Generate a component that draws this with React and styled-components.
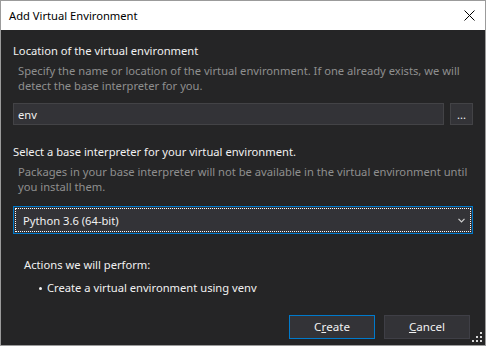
import React from 'react'
import styled, { createGlobalStyle } from 'styled-components'

const GlobalStyle = createGlobalStyle`
    html, body {
        margin: 0;
        padding: 0;
        background: #252526;
    }
    * {
        box-sizing: border-box;
    }
`

const Window = styled.div`
    position: relative;
    width: 486px;
    height: 346px;
    border: 1px solid #9b9b9b;
    display: flex;
    flex-direction: column;
    font-family: "Noto Sans", "Open Sans", sans-serif;
    font-size: 11.2px;
`
const TitleBar = styled.div`
    height: 29px;
    background: #ffffff;
    display: flex;
    align-items: center;
    justify-content: space-between;
    padding: 0 10px 0 8px;
    color: #000000;
`
const Title = styled.span`
    line-height: 16px;
`
const CloseButton = styled.div`
    width: 12px;
    height: 12px;
    display: flex;
    align-items: center;
    justify-content: center;
`
const Body = styled.div`
    flex: 1;
    background: #252526;
    display: flex;
    flex-direction: column;
    padding: 13px 12px 6px 12px;
    color: #f1f1f1;
`
const Heading = styled.div`
    line-height: 16px;
    margin-top: ${p => p.$top || 0}px;
`
const Description = styled.div`
    color: #8f8f8f;
    line-height: 15px;
    padding-left: 5px;
    margin-top: 4px;
    white-space: nowrap;
`
const InputRow = styled.div`
    display: flex;
    gap: 6px;
    margin-top: 10px;
`
const TextInput = styled.div`
    flex: 1;
    height: 22px;
    background: #333337;
    border: 1px solid #434346;
    display: flex;
    align-items: center;
    padding-left: 4px;
    color: #f1f1f1;
`
const BrowseButton = styled.div`
    width: 23px;
    height: 22px;
    background: #333337;
    border: 1px solid #434346;
    display: flex;
    align-items: flex-end;
    justify-content: center;
    padding-bottom: 3px;
    line-height: 12px;
    color: #f1f1f1;
`
const Select = styled.div`
    position: relative;
    margin-top: 12px;
    height: 28px;
    background: #333337;
    border: 1px solid #007acc;
    display: flex;
    align-items: center;
    justify-content: space-between;
    padding: 0 7px 0 9px;
    color: #f1f1f1;
    &::after {
        content: '';
        position: absolute;
        inset: 1px;
        border: 1px dotted #ffffff;
        pointer-events: none;
    }
`
const Actions = styled.div`
    margin-top: 23px;
    padding-left: 11px;
`
const ActionsTitle = styled.div`
    line-height: 16px;
`
const ActionList = styled.ul`
    list-style: none;
    margin: 7px 0 0 0;
    padding: 0 0 0 15px;
`
const ActionItem = styled.li`
    display: flex;
    align-items: center;
    line-height: 16px;
    gap: 5px;
    &::before {
        content: '';
        width: 3px;
        height: 3px;
        border-radius: 50%;
        background: #f1f1f1;
    }
`
const ButtonRow = styled.div`
    margin-top: auto;
    display: flex;
    justify-content: flex-end;
    gap: 9px;
    padding-right: 3px;
`
const Button = styled.div`
    width: 86px;
    height: 24px;
    background: #333337;
    border: 1px solid ${p => (p.$primary ? '#007acc' : '#3f3f46')};
    display: flex;
    align-items: center;
    justify-content: center;
    color: #f1f1f1;
    line-height: 16px;
    font-size: 11.6px;
`
const Grip = styled.svg`
    position: absolute;
    right: 2px;
    bottom: 2px;
`

function App() {
    return (
        <>
            <GlobalStyle />
            <Window>
                <TitleBar>
                    <Title>Add Virtual Environment</Title>
                    <CloseButton>
                        <svg width="11" height="11" viewBox="0 0 11 11">
                            <path d="M0.5 0.5 L10.5 10.5 M10.5 0.5 L0.5 10.5" stroke="#000" strokeWidth="1" fill="none" />
                        </svg>
                    </CloseButton>
                </TitleBar>
                <Body>
                    <Heading>Location of the virtual environment</Heading>
                    <Description>
                        Specify the name or location of the virtual environment. If one already exists, we will<br />
                        detect the base interpreter for you.
                    </Description>
                    <InputRow>
                        <TextInput>env</TextInput>
                        <BrowseButton>...</BrowseButton>
                    </InputRow>
                    <Heading $top={19}>Select a base interpreter for your virtual environment.</Heading>
                    <Description>
                        Packages in your base interpreter will not be available in the virtual environment until<br />
                        you install them.
                    </Description>
                    <Select>
                        <span>Python 3.6 (64-bit)</span>
                        <svg width="7" height="5" viewBox="0 0 7 5">
                            <path d="M0.5 0.8 L3.5 3.8 L6.5 0.8" stroke="#d0d0d0" strokeWidth="1.2" fill="none" />
                        </svg>
                    </Select>
                    <Actions>
                        <ActionsTitle>Actions we will perform:</ActionsTitle>
                        <ActionList>
                            <ActionItem>Create a virtual environment using venv</ActionItem>
                        </ActionList>
                    </Actions>
                    <ButtonRow>
                        <Button $primary>C<u>r</u>eate</Button>
                        <Button><u>C</u>ancel</Button>
                    </ButtonRow>
                </Body>
                <Grip width="11" height="11" viewBox="0 0 11 11">
                    <g fill="#d8d8d8">
                        <rect x="8" y="0" width="2" height="2" />
                        <rect x="4" y="4" width="2" height="2" />
                        <rect x="8" y="4" width="2" height="2" />
                        <rect x="0" y="8" width="2" height="2" />
                        <rect x="4" y="8" width="2" height="2" />
                        <rect x="8" y="8" width="2" height="2" />
                    </g>
                </Grip>
            </Window>
        </>
    )
}

export default App
